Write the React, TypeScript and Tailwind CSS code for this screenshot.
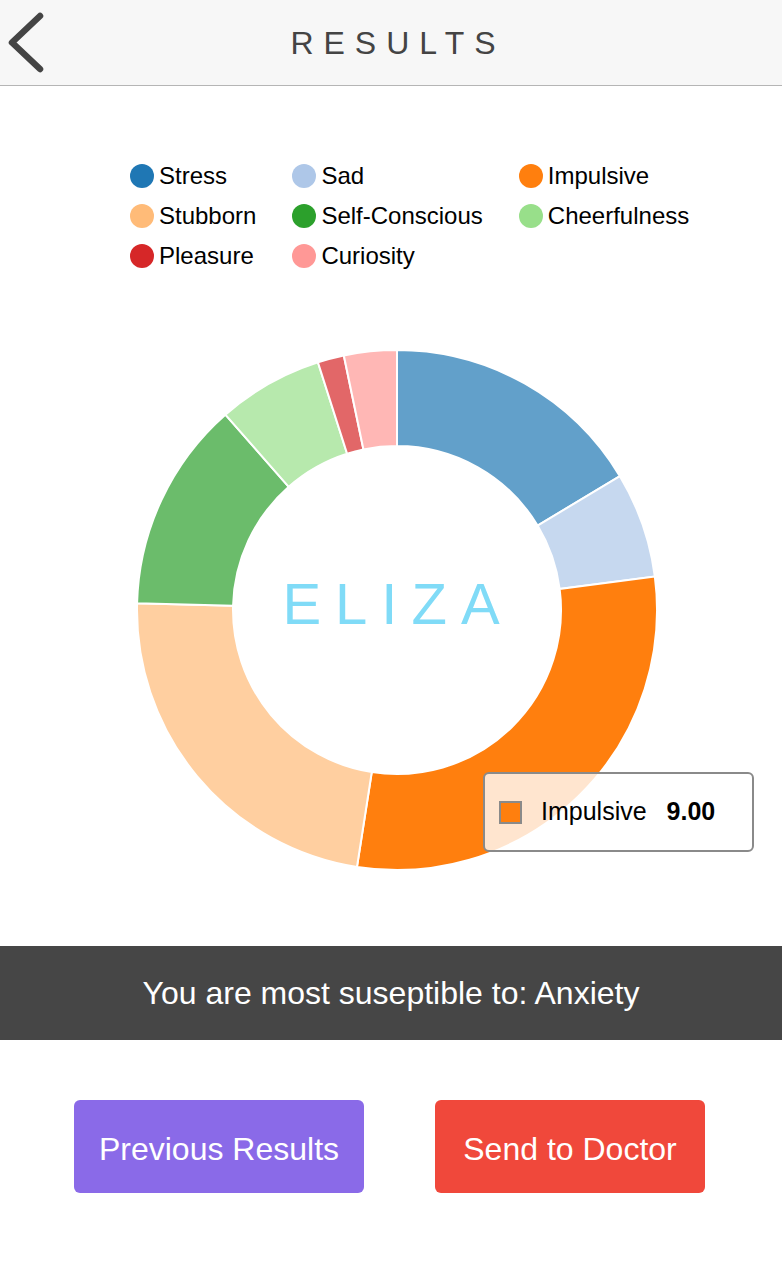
import React from 'react'

type Slice = { label: string; value: number; color: string }

const slices: Slice[] = [
  { label: 'Stress', value: 5, color: '#1f77b4' },
  { label: 'Sad', value: 2, color: '#aec7e8' },
  { label: 'Impulsive', value: 9, color: '#ff7f0e' },
  { label: 'Stubborn', value: 7, color: '#ffbb78' },
  { label: 'Self-Conscious', value: 4, color: '#2ca02c' },
  { label: 'Cheerfulness', value: 2, color: '#98df8a' },
  { label: 'Pleasure', value: 0.5, color: '#d62728' },
  { label: 'Curiosity', value: 1, color: '#ff9896' },
]

const CX = 397
const CY = 334
const R_OUT = 260
const R_IN = 164

function pt(r: number, a: number) {
  return [CX + r * Math.sin(a), CY - r * Math.cos(a)]
}

function arcPath(a0: number, a1: number) {
  const large = a1 - a0 > Math.PI ? 1 : 0
  const [x0, y0] = pt(R_OUT, a0)
  const [x1, y1] = pt(R_OUT, a1)
  const [x2, y2] = pt(R_IN, a1)
  const [x3, y3] = pt(R_IN, a0)
  return `M${x0},${y0} A${R_OUT},${R_OUT} 0 ${large} 1 ${x1},${y1} L${x2},${y2} A${R_IN},${R_IN} 0 ${large} 0 ${x3},${y3} Z`
}

const Donut = () => {
  const total = slices.reduce((s, d) => s + d.value, 0)
  let acc = 0
  return (
    <svg width="782" height="670" viewBox="0 0 782 670">
      {slices.map((d, i) => {
        const a0 = (acc / total) * Math.PI * 2
        acc += d.value
        const a1 = (acc / total) * Math.PI * 2
        const active = d.label === 'Impulsive'
        return (
          <path
            key={i}
            d={arcPath(a0, a1)}
            fill={d.color}
            fillOpacity={active ? 1 : 0.7}
            stroke="#ffffff"
            strokeWidth={2}
          />
        )
      })}
    </svg>
  )
}

export default function App() {
  return (
    <div className="w-[782px] min-h-[1268px] bg-white font-['Liberation_Sans',Arial,sans-serif]">
      <header className="h-[86px] bg-[#f7f7f7] border-b border-[#b5b5b5] flex items-center">
        <button className="w-[60px] h-full flex items-center">
          <svg width="50" height="86" viewBox="0 0 50 86">
            <polyline
              points="40,16 12,42.5 40,69"
              fill="none"
              stroke="#444444"
              strokeWidth="6.5"
              strokeLinecap="round"
              strokeLinejoin="round"
            />
          </svg>
        </button>
        <h1 className="flex-1 text-center text-[32px] text-[#444444] tracking-[10px] pl-[14px]">
          RESULTS
        </h1>
        <div className="w-[60px]" />
      </header>

      <div className="mt-[70px] pl-[130px] grid grid-cols-[auto_auto_auto] justify-start gap-x-[36px]">
        {slices.map((s) => (
          <div key={s.label} className="h-[40px] flex items-center gap-[5px]">
            <span
              className="w-[24px] h-[24px] rounded-full shrink-0"
              style={{ backgroundColor: s.color }}
            />
            <span className="text-[24px] text-black leading-none">{s.label}</span>
          </div>
        ))}
      </div>

      <div className="relative h-[670px]">
        <Donut />
        <div className="absolute left-0 top-[293px] w-[796px] flex justify-center">
          <span className="text-[58px] leading-[70px] tracking-[14px] text-[#80dbf7]">ELIZA</span>
        </div>
        <div className="absolute left-[483px] top-[496px] w-[271px] h-[80px] rounded-[6px] border-2 border-[#8a8a8a] bg-white/80 flex items-center pl-[14px]">
          <span className="w-[23px] h-[23px] bg-[#ff7f0e] border-2 border-[#8a8a8a]" />
          <span className="ml-[19px] text-[25px] text-black">Impulsive</span>
          <span className="ml-[20px] text-[25px] font-bold text-black">9.00</span>
        </div>
      </div>

      <div className="h-[94px] bg-[#464646] flex items-center justify-center">
        <p className="text-[32px] text-white">You are most suseptible to: Anxiety</p>
      </div>

      <div className="mt-[60px] pl-[74px] flex gap-[71px]">
        <button className="w-[290px] h-[93px] rounded-[6px] bg-[#8a6ae8] text-white text-[32px] pt-[4px]">
          Previous Results
        </button>
        <button className="w-[270px] h-[93px] rounded-[6px] bg-[#f0483b] text-white text-[32px] pt-[4px]">
          Send to Doctor
        </button>
      </div>
    </div>
  )
}
